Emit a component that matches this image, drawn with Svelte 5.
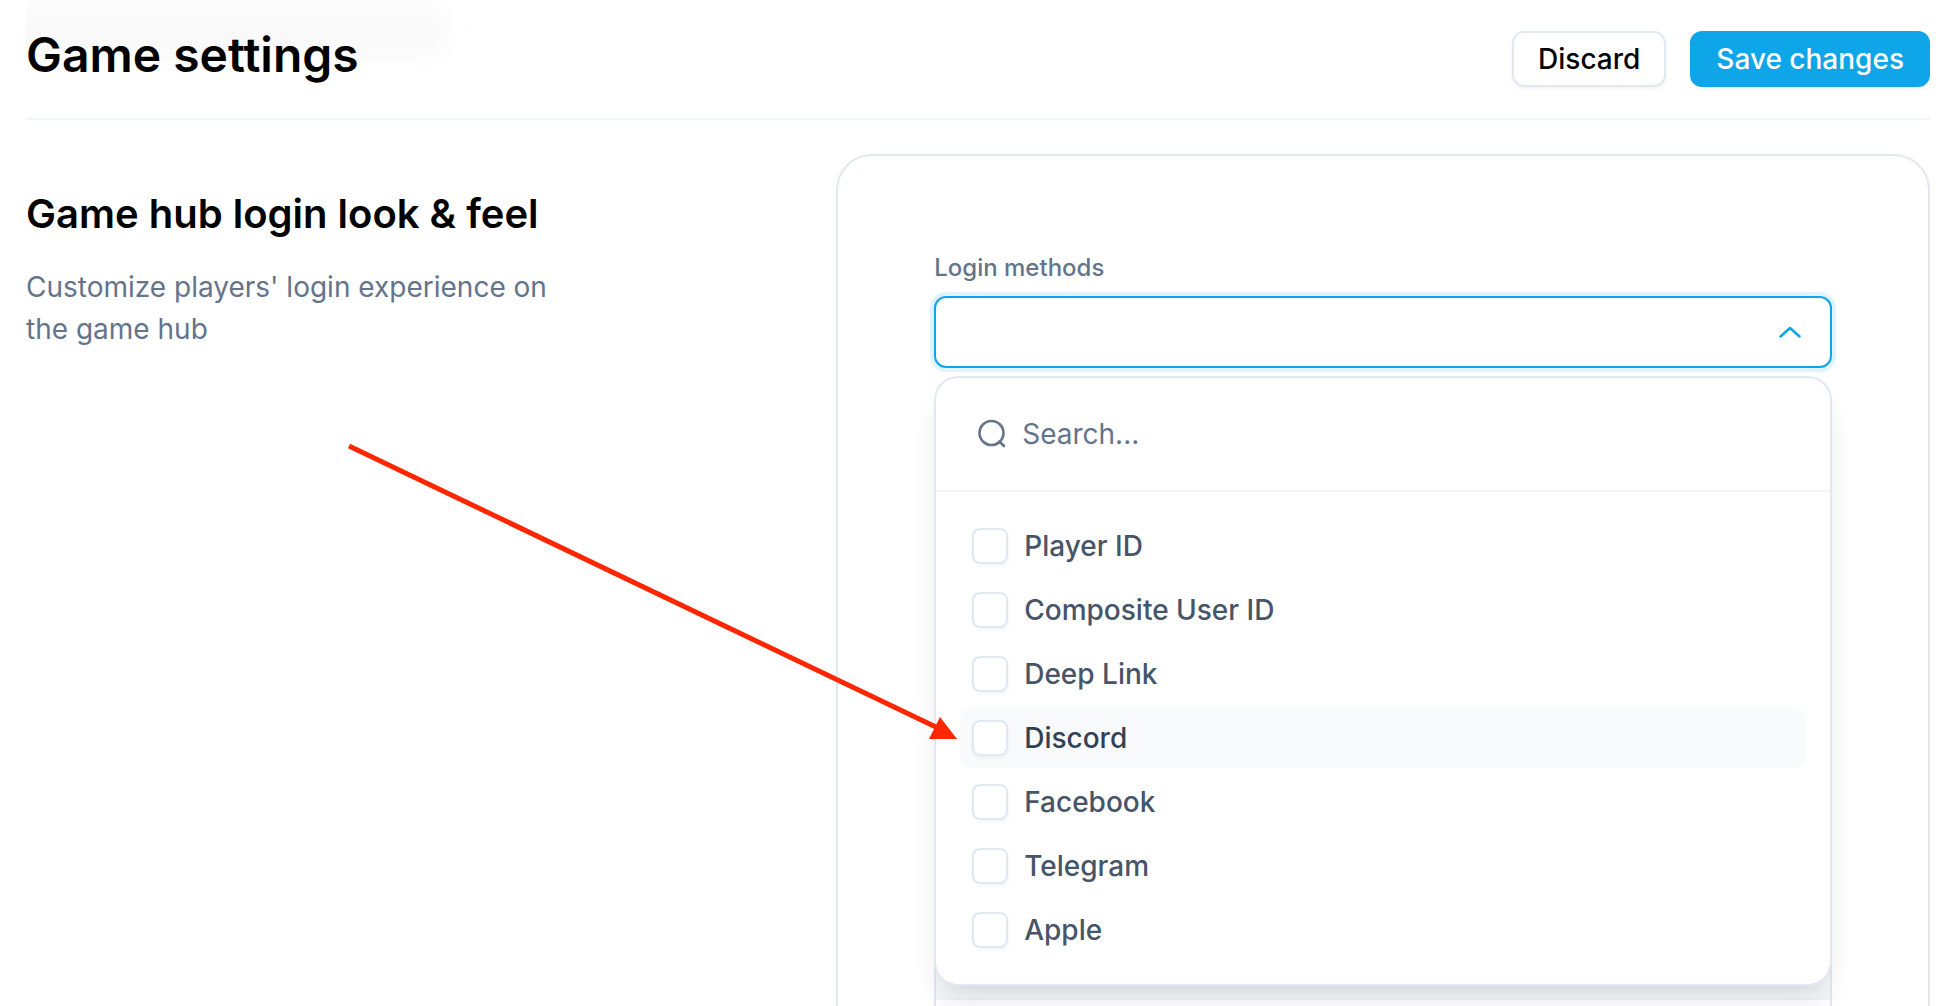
<script lang="ts">
  type Method = { id: string; label: string };

  const methods: Method[] = [
    { id: 'player-id', label: 'Player ID' },
    { id: 'composite', label: 'Composite User ID' },
    { id: 'deep-link', label: 'Deep Link' },
    { id: 'discord', label: 'Discord' },
    { id: 'facebook', label: 'Facebook' },
    { id: 'telegram', label: 'Telegram' },
    { id: 'apple', label: 'Apple' }
  ];

  let open = $state(true);
  let query = $state('');
  let active = $state('discord');
  let selected = $state<string[]>([]);

  const visible = $derived(methods.filter((m) => m.label.toLowerCase().includes(query.toLowerCase())));
</script>

<div class="page">
  <header>
    <h1>Game settings</h1>
    <div class="actions">
      <button type="button" class="btn">Discard</button>
      <button type="button" class="btn primary">Save changes</button>
    </div>
  </header>

  <main>
    <section class="copy">
      <h2>Game hub login look &amp; feel</h2>
      <p>Customize players' login experience on the game hub</p>
    </section>

    <section class="card">
      <label class="field-label" for="methods">Login methods</label>
      <div class="select">
        <button id="methods" type="button" class="trigger" aria-expanded={open} onclick={() => (open = !open)}>
          <svg width="24" height="14" viewBox="0 0 24 14" aria-hidden="true"><path d="M2.5 11.5 12 3l9.500 8.500" /></svg>
        </button>

        {#if open}
          <div class="menu">
            <div class="search">
              <svg width="30" height="30" viewBox="0 0 30 30" aria-hidden="true">
                <circle cx="15.500" cy="14" r="12" />
                <path d="m23.500 22.500 4.500 4.500" />
              </svg>
              <input type="text" placeholder="Search..." aria-label="Search login methods" bind:value={query} />
            </div>
            <ul>
              {#each visible as method (method.id)}
                <li class:active={active === method.id} onmouseenter={() => (active = method.id)}>
                  <label>
                    <input type="checkbox" value={method.id} bind:group={selected} />
                    {method.label}
                  </label>
                  {#if method.id === 'discord'}
                    <svg class="pointer" width="614" height="300" viewBox="0 0 614 300" aria-hidden="true">
                      <path class="shaft" d="M3 6 592 288" />
                      <path class="head" d="m611 299-28 0 11-22z" />
                    </svg>
                  {/if}
                </li>
              {/each}
            </ul>
          </div>
        {/if}
      </div>

      <div class="preview">
        <div class="preview-bar"></div>
      </div>
    </section>
  </main>
</div>

<style>
  :global(body) { background: #fff; }

  .page {
    box-sizing: border-box;
    height: 100vh;
    overflow: hidden;
    padding: 0 28px 0 26px;
    color: #000;
    font-family: Inter, "Liberation Sans", sans-serif;
    font-size: 28px;
    line-height: 42px;
  }

  h1, h2, p, ul { margin: 0; padding: 0; }
  button, input { font: inherit; }

  header {
    position: relative;
    display: flex;
    align-items: center;
    justify-content: space-between;
    height: 118px;
    border-bottom: 2px solid #f1f5f9;
    overflow: hidden;
  }
  header::before {
    content: "";
    position: absolute;
    left: -40px;
    top: 0;
    width: 458px;
    height: 54px;
    background: linear-gradient(#fcfcfc, #f7f7f7);
    filter: blur(12px);
  }
  h1 { position: relative; padding-bottom: 8px; font-size: 48px; line-height: 56px; font-weight: 600; }

  .actions { display: flex; gap: 24px; }
  .btn {
    box-sizing: border-box;
    height: 56px;
    padding: 0 24px;
    border: 2px solid #e2e8f0;
    border-radius: 12px;
    background: #fff;
    color: #000;
    font-weight: 500;
    box-shadow: 0 2px 4px rgba(0, 0, 0, .05);
  }
  .primary { border-color: #0ea5e9; background: #0ea5e9; color: #fff; }

  main { display: grid; grid-template-columns: 20fr 27fr; padding-top: 34px; }

  .copy { padding-top: 34px; }
  h2 { font-size: 40px; line-height: 52px; font-weight: 600; }
  p { max-width: 560px; margin-top: 26px; color: #64748b; }

  .card {
    padding: 96px;
    border: 2px solid #e2e8f0;
    border-radius: 36px;
  }
  .field-label { display: block; margin-bottom: 12px; color: #64748b; font-size: 24px; line-height: 32px; font-weight: 500; }

  .select { position: relative; }
  .trigger {
    box-sizing: border-box;
    display: flex;
    align-items: center;
    justify-content: flex-end;
    width: 100%;
    height: 72px;
    padding: 0 28px;
    border: 2px solid #0ea5e9;
    border-radius: 12px;
    background: #fff;
    box-shadow: 0 0 0 4px #e0f2fe;
  }
  .trigger svg { fill: none; stroke: #0ea5e9; stroke-width: 2.5; stroke-linecap: round; stroke-linejoin: round; }

  .menu {
    position: absolute;
    z-index: 1;
    top: 80px;
    left: 0;
    right: 0;
    border: 2px solid #e2e8f0;
    border-radius: 24px;
    background: #fff;
    box-shadow: 0 20px 30px -6px rgba(0, 0, 0, .1), 0 8px 12px -8px rgba(0, 0, 0, .05);
  }
  .search {
    display: flex;
    align-items: center;
    gap: 16px;
    height: 112px;
    padding: 0 40px;
    border-bottom: 2px solid #f1f5f9;
  }
  .search svg { fill: none; stroke: #64748b; stroke-width: 2.6; stroke-linecap: round; }
  .search input { flex: 1; min-width: 0; padding: 0; border: 0; outline: 0; background: none; color: #334155; }
  .search input::placeholder { color: #64748b; opacity: 1; }

  ul { display: grid; gap: 4px; padding: 24px; list-style: none; }
  li { position: relative; border-radius: 12px; color: #475569; font-weight: 500; }
  li.active { background: #f8fafc; color: #334155; }
  label { display: flex; align-items: center; }
  li label { gap: 16px; height: 60px; padding: 0 12px; }
  li input {
    appearance: none;
    box-sizing: border-box;
    width: 36px;
    height: 36px;
    margin: 0;
    border: 2px solid #e2e8f0;
    border-radius: 8px;
    background: #fff;
    box-shadow: 0 2px 4px rgba(0, 0, 0, .05);
  }
  li input:checked { border-color: #0ea5e9; background: #0ea5e9; }

  .pointer { position: absolute; right: 100%; bottom: 28px; pointer-events: none; }
  .shaft { stroke: #ff2600; stroke-width: 5; }
  .head { fill: #ff2600; }

  .preview { height: 600px; margin-top: 260px; border: 2px solid #e2e8f0; border-radius: 24px; }
  .preview-bar { height: 368px; border-bottom: 2px solid #f1f5f9; border-radius: 22px 22px 0 0; background: #f4f8fb; }
</style>
